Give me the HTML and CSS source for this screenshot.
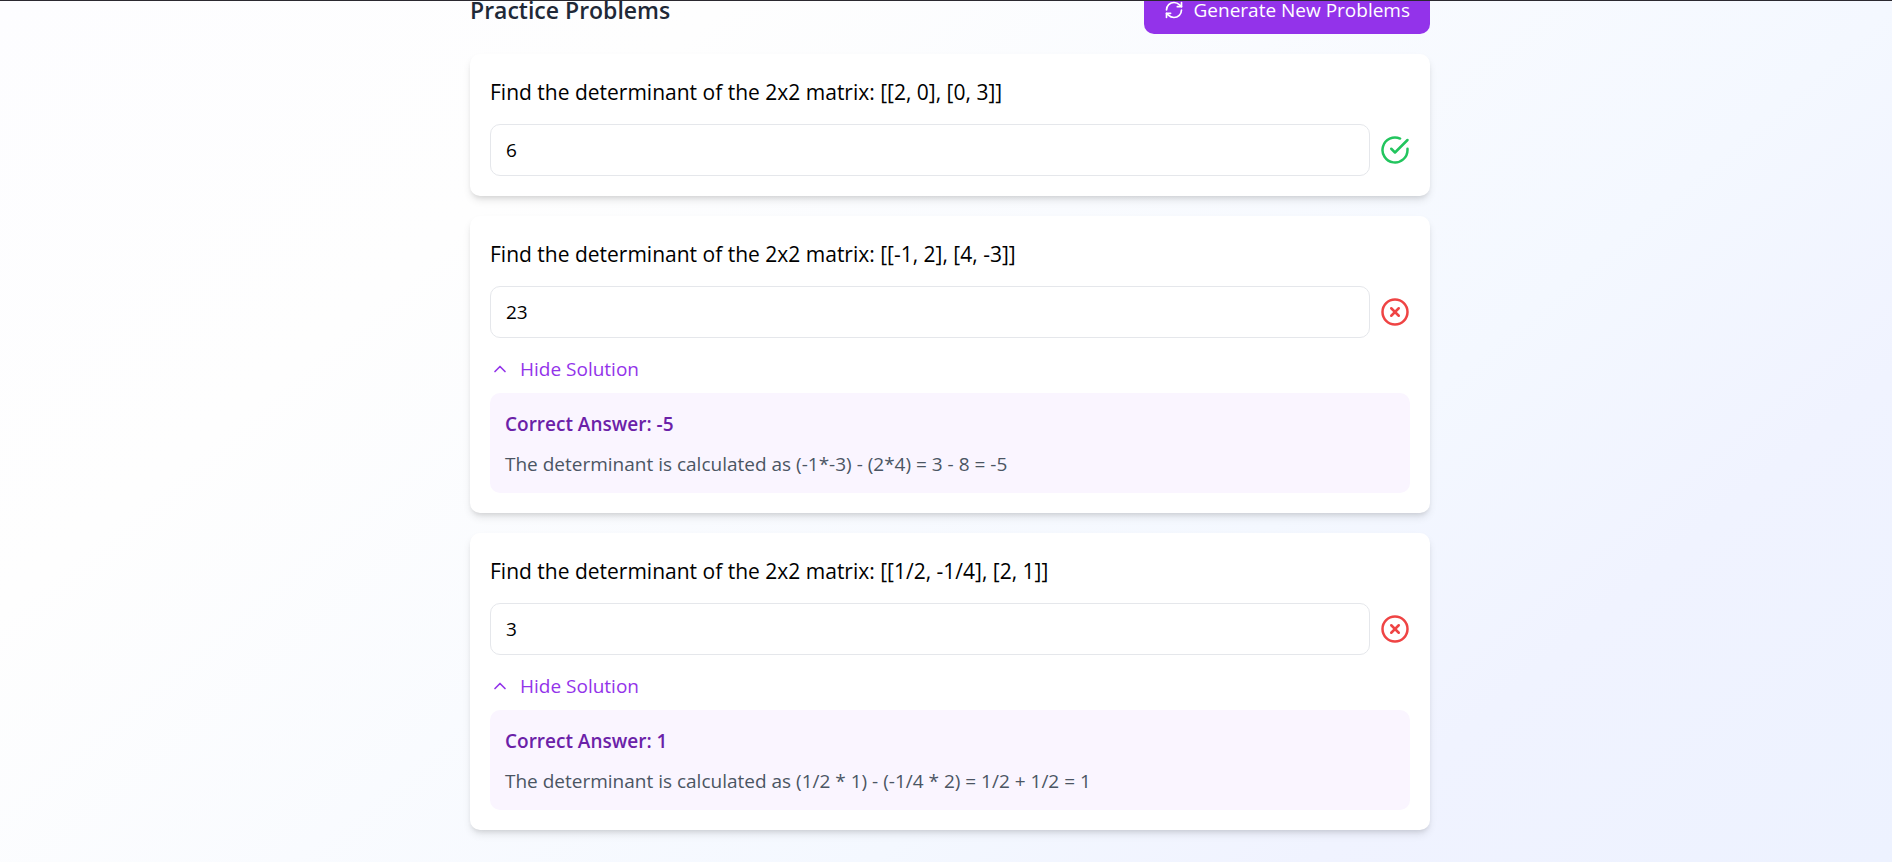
FILE: index.html
```html
<!DOCTYPE html>
<html lang="en">
<head>
<meta charset="utf-8">
<meta name="viewport" content="width=device-width, initial-scale=1">
<title>Practice Problems</title>
<link rel="stylesheet" href="styles.css">
</head>
<body>
<main class="page">
  <header class="header">
    <h2 class="title">Practice Problems</h2>
    <button class="generate" type="button">
      <svg class="icon-sm" viewBox="0 0 24 24" aria-hidden="true"><path d="M3 12a9 9 0 0 1 9-9 9.75 9.75 0 0 1 6.74 2.74L21 8"/><path d="M21 3v5h-5"/><path d="M21 12a9 9 0 0 1-9 9 9.75 9.75 0 0 1-6.74-2.74L3 16"/><path d="M8 16H3v5"/></svg>
      Generate New Problems
    </button>
  </header>

  <section class="card">
    <label class="question" for="answer-1">Find the determinant of the 2x2 matrix: [[2, 0], [0, 3]]</label>
    <div class="answer-row">
      <input class="answer" id="answer-1" type="text" value="6">
      <svg class="icon-lg correct" viewBox="0 0 24 24" role="img" aria-label="Correct"><path d="M22 11.08V12a10 10 0 1 1-5.93-9.14"/><path d="m9 11 3 3L22 4"/></svg>
    </div>
  </section>

  <section class="card">
    <label class="question" for="answer-2">Find the determinant of the 2x2 matrix: [[-1, 2], [4, -3]]</label>
    <div class="answer-row">
      <input class="answer" id="answer-2" type="text" value="23">
      <svg class="icon-lg incorrect" viewBox="0 0 24 24" role="img" aria-label="Incorrect"><circle cx="12" cy="12" r="10"/><path d="m15 9-6 6"/><path d="m9 9 6 6"/></svg>
    </div>
    <button class="toggle" type="button" aria-expanded="true">
      <svg class="icon-sm" viewBox="0 0 24 24" aria-hidden="true"><path d="m18 15-6-6-6 6"/></svg>
      Hide Solution
    </button>
    <div class="solution">
      <p class="solution-answer">Correct Answer: -5</p>
      <p class="solution-text">The determinant is calculated as (-1*-3) - (2*4) = 3 - 8 = -5</p>
    </div>
  </section>

  <section class="card">
    <label class="question" for="answer-3">Find the determinant of the 2x2 matrix: [[1/2, -1/4], [2, 1]]</label>
    <div class="answer-row">
      <input class="answer" id="answer-3" type="text" value="3">
      <svg class="icon-lg incorrect" viewBox="0 0 24 24" role="img" aria-label="Incorrect"><circle cx="12" cy="12" r="10"/><path d="m15 9-6 6"/><path d="m9 9 6 6"/></svg>
    </div>
    <button class="toggle" type="button" aria-expanded="true">
      <svg class="icon-sm" viewBox="0 0 24 24" aria-hidden="true"><path d="m18 15-6-6-6 6"/></svg>
      Hide Solution
    </button>
    <div class="solution">
      <p class="solution-answer">Correct Answer: 1</p>
      <p class="solution-text">The determinant is calculated as (1/2 * 1) - (-1/4 * 2) = 1/2 + 1/2 = 1</p>
    </div>
  </section>
</main>
</body>
</html>
```
FILE: styles.css
```css
* {
  box-sizing: border-box;
}

html {
  height: 100%;
}

body {
  margin: 0;
  min-height: 100%;
  padding-left: 8px;
  overflow: hidden;
  background: linear-gradient(140deg, #fdfdff, #fefefe 25%, #f4f8ff 65%, #f0f3ff 80%, #edf2ff);
  color: #000;
  font-family: "Segoe UI", "Open Sans", "Noto Sans", sans-serif;
  font-size: 19px;
  line-height: 30px;
}

/* Edge of the window frame above the scrolled page */
body::before {
  content: "";
  position: fixed;
  inset: 0 0 auto;
  z-index: 1;
  height: 1px;
  background: #2b2930;
}

.page {
  display: flex;
  flex-direction: column;
  gap: 20px;
  max-width: 960px;
  margin: -16px auto 0;
  padding-bottom: 32px;
}

.header {
  display: flex;
  align-items: center;
  justify-content: space-between;
}

.title {
  margin: 0;
  padding-top: 2px;
  color: #1f2937;
  font-size: 23px;
  font-weight: 600;
  line-height: 36px;
}

button {
  display: inline-flex;
  align-items: center;
  gap: 10px;
  border: 0;
  font: inherit;
  cursor: pointer;
}

svg {
  flex: none;
  fill: none;
  stroke: currentColor;
  stroke-width: 2;
  stroke-linecap: round;
  stroke-linejoin: round;
}

.icon-sm {
  width: 20px;
  height: 20px;
}

.icon-lg {
  width: 30px;
  height: 30px;
}

.generate {
  padding: 11px 20px 9px;
  border-radius: 10px;
  background: #9333ea;
  color: #fff;
  font-weight: 500;
}

.card {
  display: flex;
  flex-direction: column;
  align-items: stretch;
  padding: 20px;
  border-radius: 10px;
  background: #fff;
  box-shadow: 0 5px 8px -1px rgba(0, 0, 0, 0.1), 0 3px 5px -2px rgba(0, 0, 0, 0.1);
}

.question {
  margin-bottom: 14px;
  font-size: 21px;
  line-height: 36px;
}

.answer-row {
  display: flex;
  align-items: center;
  gap: 10px;
}

.answer {
  flex: 1;
  min-width: 0;
  height: 52px;
  padding: 10px 15px;
  border: 1px solid #e5e7eb;
  border-radius: 10px;
  background: #fff;
  color: inherit;
  font: inherit;
}

.correct {
  color: #22c55e;
}

.incorrect {
  color: #ef4444;
}

.toggle {
  align-self: flex-start;
  margin: 16px 0 9px;
  padding: 0;
  background: none;
  color: #9333ea;
}

.solution {
  display: flex;
  flex-direction: column;
  gap: 10px;
  padding: 16px 15px 14px;
  border-radius: 10px;
  background: #faf5ff;
}

.solution p {
  margin: 0;
}

.solution-answer {
  color: #6b21a8;
  font-weight: 600;
}

.solution-text {
  color: #4b5563;
}
```
